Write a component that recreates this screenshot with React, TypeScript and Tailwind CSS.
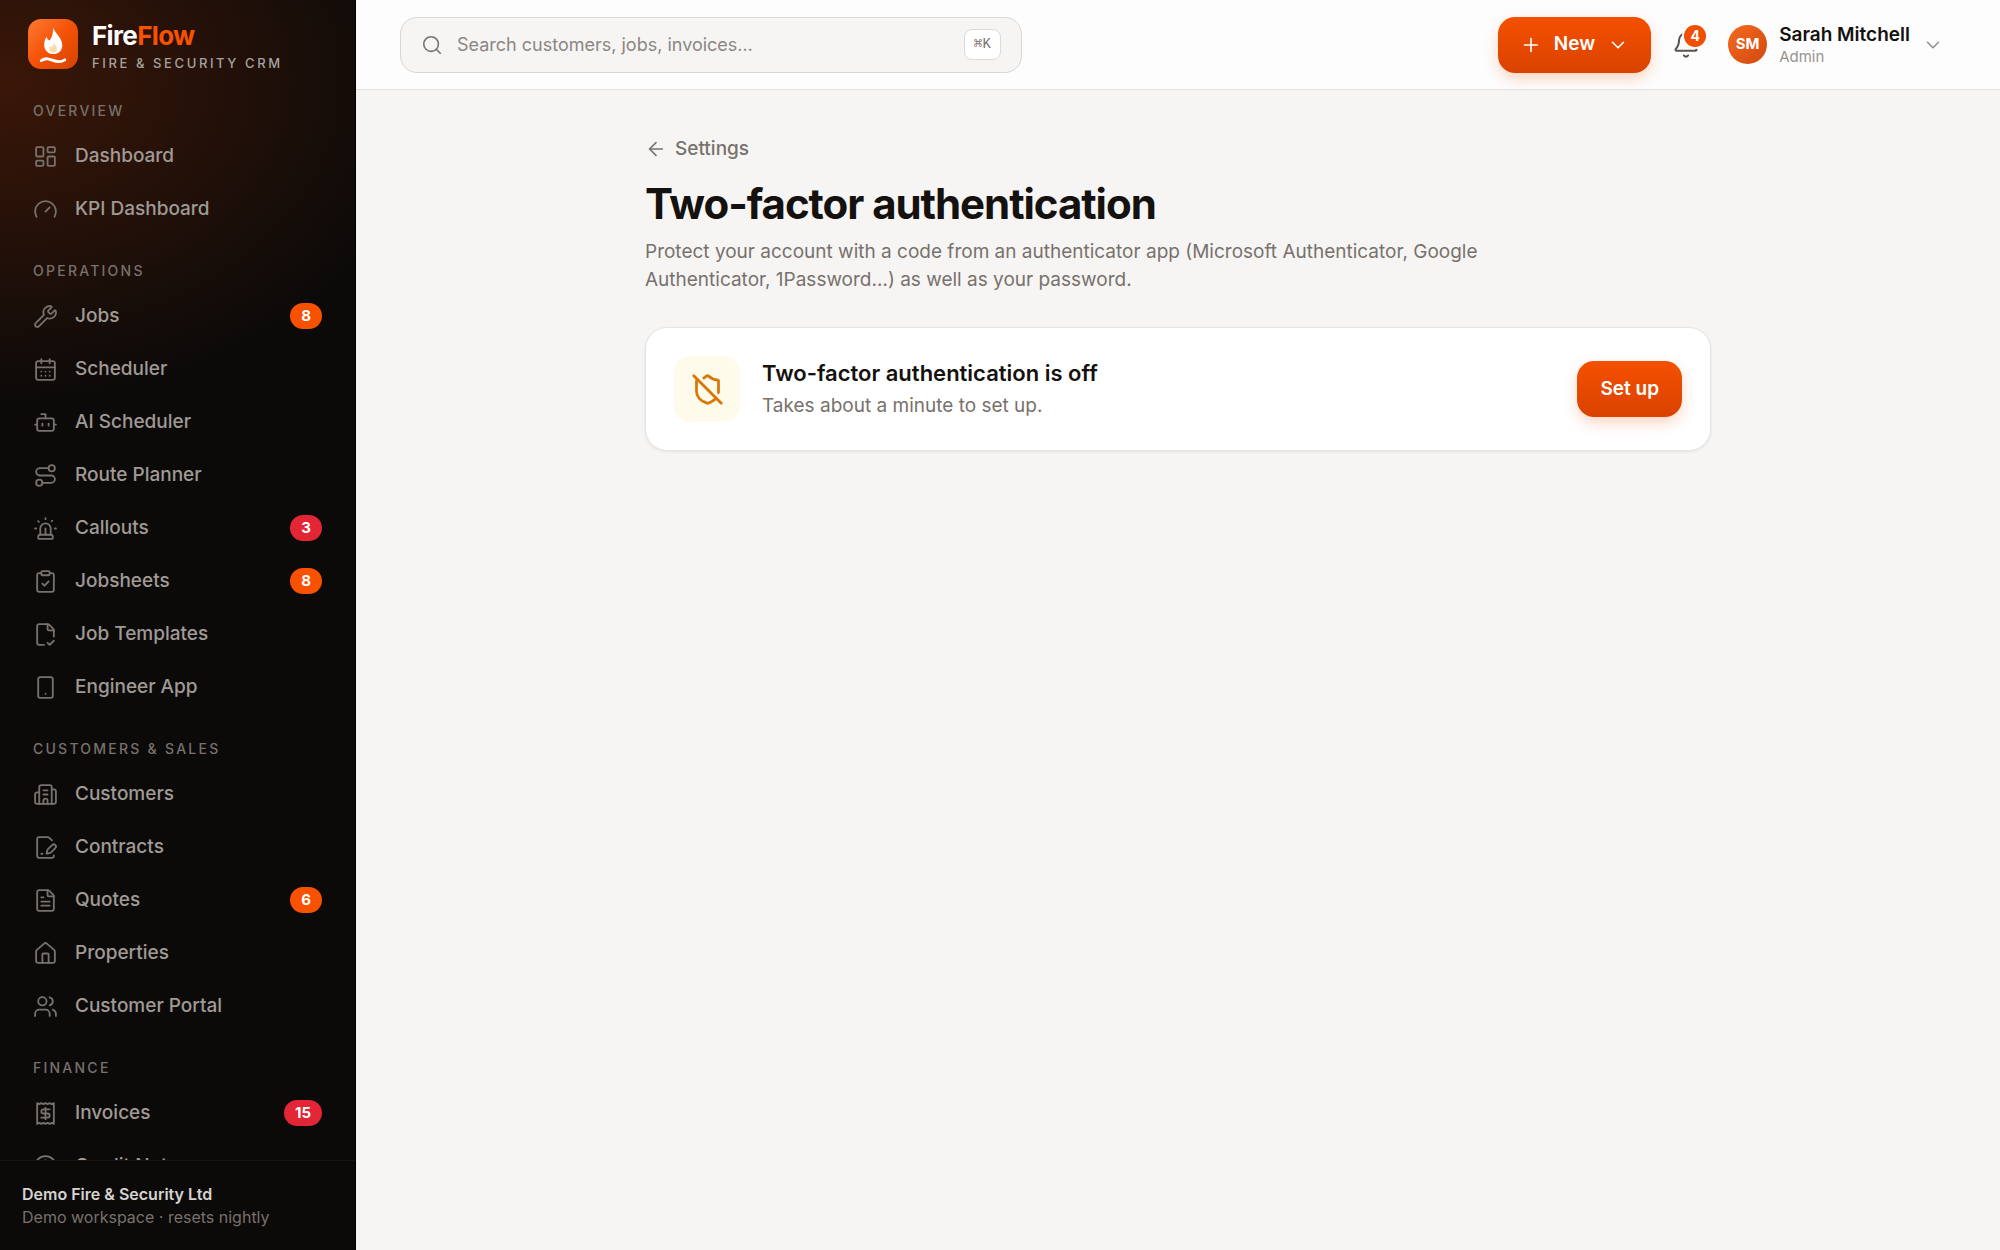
import React from "react";
import {
  ArrowLeft,
  Bell,
  Bot,
  Building2,
  CalendarDays,
  ChevronDown,
  CircleDollarSign,
  ClipboardCheck,
  FileCheckCorner,
  FilePenLine,
  FileText,
  Gauge,
  House,
  LayoutDashboard,
  Plus,
  Receipt,
  Route,
  Search,
  ShieldOff,
  Siren,
  Smartphone,
  Users,
  Wrench,
  type LucideIcon,
} from "lucide-react";

interface NavItem {
  label: string;
  icon: LucideIcon;
  count?: number;
  urgent?: boolean;
}

interface NavSection {
  title: string;
  items: NavItem[];
}

const sections: NavSection[] = [
  {
    title: "Overview",
    items: [
      { label: "Dashboard", icon: LayoutDashboard },
      { label: "KPI Dashboard", icon: Gauge },
    ],
  },
  {
    title: "Operations",
    items: [
      { label: "Jobs", icon: Wrench, count: 8 },
      { label: "Scheduler", icon: CalendarDays },
      { label: "AI Scheduler", icon: Bot },
      { label: "Route Planner", icon: Route },
      { label: "Callouts", icon: Siren, count: 3, urgent: true },
      { label: "Jobsheets", icon: ClipboardCheck, count: 8 },
      { label: "Job Templates", icon: FileCheckCorner },
      { label: "Engineer App", icon: Smartphone },
    ],
  },
  {
    title: "Customers & Sales",
    items: [
      { label: "Customers", icon: Building2 },
      { label: "Contracts", icon: FilePenLine },
      { label: "Quotes", icon: FileText, count: 6 },
      { label: "Properties", icon: House },
      { label: "Customer Portal", icon: Users },
    ],
  },
  {
    title: "Finance",
    items: [
      { label: "Invoices", icon: Receipt, count: 15, urgent: true },
      { label: "Credit Notes", icon: CircleDollarSign },
    ],
  },
];

function Logo() {
  return (
    <svg width="50" height="50" viewBox="0 0 50 50" aria-hidden="true">
      <defs>
        <linearGradient id="logo-bg" x1="0" y1="0" x2="1" y2="1">
          <stop offset="0" stopColor="#ff7a33" />
          <stop offset="0.5" stopColor="#f45206" />
          <stop offset="1" stopColor="#d54304" />
        </linearGradient>
      </defs>
      <rect width="50" height="50" rx="13" fill="url(#logo-bg)" />
      <path
        d="M25.2 8.5C26.6 14 34.3 18.6 34.3 26.2C34.3 31.6 30.4 35 25.4 35C20.3 35 16.2 31.4 16.2 26.2C16.2 22.6 17.2 19.8 18.6 17.8C19 19.8 20.2 21.2 21.6 21.6C24.4 18.4 25.2 13.2 25.2 8.5Z"
        fill="#fff"
      />
      <path
        d="M26 23.6C26.4 25.8 29 27.2 29 30C29 32.4 27.2 33.8 25.2 33.8C22.8 33.8 21.2 32.2 21.2 30C21.2 28.6 21.8 27.6 22.6 26.8C23 27.6 23.4 27.9 24 28.1C25.2 27 26 25.4 26 23.6Z"
        fill="#fdd9b0"
      />
      <path
        d="M13.2 41.6C17.6 38.6 21 39.8 25 41.4C29.4 43.2 32.8 43.4 36.8 40.8"
        fill="none"
        stroke="#fff"
        strokeWidth="2.8"
        strokeLinecap="round"
      />
    </svg>
  );
}

function NavLink({ item }: { item: NavItem }) {
  const Icon = item.icon;
  return (
    <li>
      <a
        href="#"
        className="flex h-[50px] items-center gap-[17px] rounded-xl px-4 text-[19px] font-medium text-[#a09a96] hover:bg-white/5"
      >
        <Icon size={25} strokeWidth={1.75} className="shrink-0 text-[#78716c]" />
        <span className="flex-1">{item.label}</span>
        {item.count && (
          <span
            className={`rounded-full px-[11px] text-[15px] leading-[26px] font-bold text-white ${
              item.urgent ? "bg-[#e32636]" : "bg-[#f85200]"
            }`}
          >
            {item.count}
          </span>
        )}
      </a>
    </li>
  );
}

function Sidebar() {
  return (
    <aside className="flex w-[356px] shrink-0 flex-col border-r border-black bg-[#0c0a09] bg-[radial-gradient(ellipse_430px_320px_at_0px_80px,#3b1708_0%,#0c0a0900_100%)]">
      <div className="flex items-start gap-[14px] px-7 pt-[19px] pb-2">
        <Logo />
        <div>
          <p className="text-[26px] leading-[34px] font-bold tracking-tight text-white">
            Fire<span className="text-[#f85200]">Flow</span>
          </p>
          <p className="text-[13px] leading-5 font-medium tracking-[0.2em] whitespace-nowrap text-[#a8a29e] uppercase">
            Fire &amp; Security CRM
          </p>
        </div>
      </div>
      <nav className="min-h-0 flex-1 overflow-y-auto px-[17px] pt-5 [scrollbar-width:none]">
        {sections.map((section) => (
          <div key={section.title} className="mb-[27px]">
            <h2 className="mb-[10px] px-4 text-[14px] leading-5 font-medium tracking-[0.16em] text-[#78716c] uppercase">
              {section.title}
            </h2>
            <ul className="flex flex-col gap-[3px]">
              {section.items.map((item) => (
                <NavLink key={item.label} item={item} />
              ))}
            </ul>
          </div>
        ))}
      </nav>
      <div className="border-t border-white/5 px-[22px] pt-[22px] pb-[21px]">
        <p className="text-[16px] leading-[23px] font-semibold text-[#d6d3d1]">
          Demo Fire &amp; Security Ltd
        </p>
        <p className="text-[16px] leading-[23px] text-[#78716c]">
          Demo workspace · resets nightly
        </p>
      </div>
    </aside>
  );
}

function Header() {
  return (
    <header className="flex h-[90px] shrink-0 items-center justify-between border-b border-[#e4e2e0] bg-[#fdfdfd] px-[44px]">
      <label className="flex h-[56px] w-full max-w-[622px] items-center gap-[14px] rounded-[17px] border border-[#d9d7d5] bg-[#f6f5f4] px-5">
        <Search size={22} strokeWidth={1.75} className="shrink-0 text-[#78716c]" />
        <input
          type="text"
          aria-label="Search"
          placeholder="Search customers, jobs, invoices…"
          className="min-w-0 flex-1 bg-transparent text-[18px] outline-none placeholder:text-[#8c8682]"
        />
        <kbd className="flex h-[31px] w-[37px] items-center justify-center rounded-lg border border-[#dddad8] bg-white font-['Liberation_Mono','DejaVu_Sans_Mono',monospace] text-[14px] text-[#78716c]">
          ⌘K
        </kbd>
      </label>
      <div className="flex items-center">
        <button className="flex h-[56px] items-center gap-3 rounded-[17px] bg-linear-to-b from-[#f55000] to-[#d94200] px-[22px] text-[19px] font-semibold text-white shadow-[0_6px_16px_-2px_rgba(248,82,0,0.3)]">
          <Plus size={22} strokeWidth={1.75} />
          New
          <ChevronDown size={22} strokeWidth={1.75} />
        </button>
        <button
          aria-label="Notifications"
          className="relative ml-[21px] text-[#57534e]"
        >
          <Bell size={28} strokeWidth={1.75} />
          <span className="absolute -top-[6px] left-3 size-[22px] rounded-full bg-[#f04e00] text-center text-[14px] leading-[22px] font-bold text-white ring-2 ring-[#fdfdfd]">
            4
          </span>
        </button>
        <button className="ml-7 flex items-center gap-3 pr-3 text-left">
          <span className="flex size-[39px] items-center justify-center rounded-full bg-linear-to-br from-[#f5691f] to-[#d14a10] text-[15px] font-bold text-white">
            SM
          </span>
          <span>
            <span className="block text-[19px] leading-6 font-semibold text-[#14110f]">
              Sarah Mitchell
            </span>
            <span className="block text-[15px] leading-5 text-[#98928e]">
              Admin
            </span>
          </span>
          <ChevronDown size={22} strokeWidth={1.75} className="text-[#98928e]" />
        </button>
      </div>
    </header>
  );
}

function TwoFactorPage() {
  return (
    <main className="flex-1 px-[44px] pt-[45px]">
      <div className="mx-auto max-w-[1066px]">
        <a
          href="#"
          className="inline-flex items-center gap-2 text-[19px] leading-7 font-medium text-[#78716c]"
        >
          <ArrowLeft size={22} strokeWidth={1.75} />
          Settings
        </a>
        <h1 className="mt-[10px] text-[42px] leading-[56px] font-bold tracking-tight text-[#14110f]">
          Two-factor authentication
        </h1>
        <p className="mt-[6px] max-w-[933px] text-[19px] leading-7 text-[#78716c]">
          Protect your account with a code from an authenticator app (Microsoft
          Authenticator, Google Authenticator, 1Password…) as well as your
          password.
        </p>
        <section className="mt-[33px] flex items-center gap-[22px] rounded-[22px] border border-[#e7e5e4] bg-white p-7 shadow-[0_1px_3px_rgba(0,0,0,0.08)]">
          <div className="flex size-[66px] shrink-0 items-center justify-center rounded-2xl bg-[#fffbeb] text-[#d97706]">
            <ShieldOff size={33} strokeWidth={2} />
          </div>
          <div className="flex-1">
            <h2 className="text-[22px] leading-8 font-semibold text-[#14110f]">
              Two-factor authentication is off
            </h2>
            <p className="mt-[2px] text-[19px] leading-[30px] text-[#78716c]">
              Takes about a minute to set up.
            </p>
          </div>
          <button className="h-[56px] rounded-[17px] bg-linear-to-b from-[#f55000] to-[#d94200] px-[23px] text-[19px] font-semibold text-white shadow-[0_6px_16px_-2px_rgba(248,82,0,0.3)]">
            Set up
          </button>
        </section>
      </div>
    </main>
  );
}

export default function App() {
  return (
    <div className="flex h-screen overflow-hidden bg-[#f6f5f4] font-['Inter','Liberation_Sans',sans-serif]">
      <Sidebar />
      <div className="flex min-w-0 flex-1 flex-col">
        <Header />
        <TwoFactorPage />
      </div>
    </div>
  );
}
